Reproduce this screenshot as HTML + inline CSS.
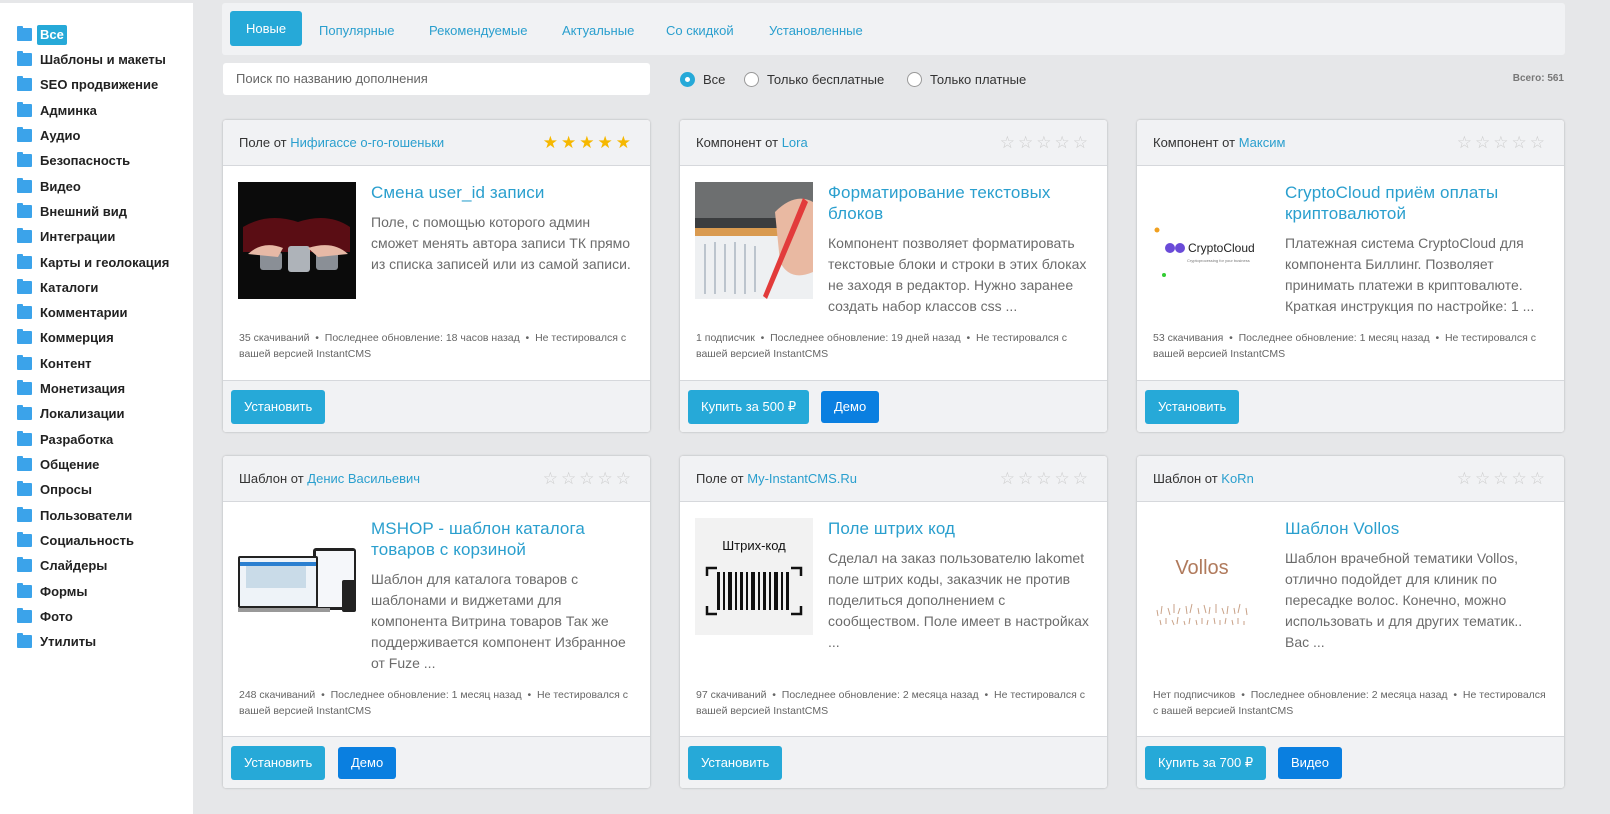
<!DOCTYPE html>
<html><head><meta charset="utf-8"><style>
*{box-sizing:border-box;margin:0;padding:0}
body{width:1610px;height:814px;overflow:hidden;background:#e6e7e9;font-family:"Liberation Sans","DejaVu Sans",sans-serif;position:relative;color:#333}
.side{position:absolute;left:0;top:3px;width:193px;height:811px;background:#fff}
.side div{position:absolute;left:17px;font-size:13px;font-weight:bold;color:#222;height:18px;line-height:18px}
.side div i{position:absolute;left:0;top:2px;width:15px;height:13px;background:#3ba3ea;border-radius:1px}
.side div i:before{content:"";position:absolute;left:0;top:-2px;width:6px;height:3px;background:#3ba3ea;border-radius:1px 1px 0 0}
.side div span{position:absolute;left:23px;white-space:nowrap}
.side div span.act{background:#26a9d8;color:#fff;padding:0 3px;border-radius:2px;left:20px;top:-1px;line-height:20px}
.tabs{position:absolute;left:222px;top:3px;width:1343px;height:52px;background:#f1f2f4;border-radius:3px}
.tabs a{position:absolute;top:11px;height:35px;line-height:33px;font-size:13px;color:#2a9fce;text-decoration:none}
.tabs a.on{background:#26a9d8;color:#fff;border-radius:3px;padding:0 16px;left:8px;top:8px;line-height:35px}
.search{position:absolute;left:223px;top:63px;width:427px;height:32px;background:#fff;border-radius:3px;font-size:13px;color:#666;padding:0 13px;line-height:32px}
.radio{position:absolute;top:72px;font-size:13px;color:#333;line-height:16px}
.radio i{position:absolute;left:0;top:0;width:15px;height:15px;border:1px solid #999;border-radius:50%;background:#fff}
.radio i.on{border:none;background:#26a9d8}
.radio i.on:after{content:"";position:absolute;left:5px;top:5px;width:5px;height:5px;border-radius:50%;background:#fff}
.radio span{margin-left:23px;white-space:nowrap}
.total{position:absolute;right:46px;top:73px;font-size:10px;font-weight:bold;color:#777}
.card{position:absolute;width:427px;background:#fff;border-radius:3px;box-shadow:0 0 2px rgba(0,0,0,.25);overflow:hidden}
.hd{height:46px;background:#f1f2f4;border-bottom:1px solid #d6d8dc;font-size:13px;line-height:46px;padding-left:16px;position:relative;color:#333}
.hd a{color:#2a9fce}
.stars{position:absolute;right:16px;top:0;font-size:17px;letter-spacing:3px;color:#ccc}
.stars.y{color:#f6b800}
.bd{position:relative}
.img{position:absolute;left:15px;top:16px;width:118px;height:117px;overflow:hidden}
.tx{position:absolute;left:148px;top:16px;right:14px}
.tt{font-size:17px;color:#2a9fce;line-height:21px;letter-spacing:.1px}
.ds{font-size:14px;color:#6b6b6b;line-height:21px;margin-top:9px}
.mt{position:absolute;left:16px;right:14px;font-size:10.5px;color:#666;line-height:16px}
.ft{position:absolute;left:0;right:0;bottom:0;height:52px;background:#f1f2f4;border-top:1px solid #d6d8dc}
.b{position:absolute;top:9px;height:34px;line-height:34px;font-size:13px;color:#fff;background:#26a9d8;border-radius:3px;padding:0 13px}
.b.d{background:#0a7fe0;height:32px;line-height:32px;top:10px}
</style></head><body>
<div class="side">
<div style="top:23px"><i></i><span class="act">Все</span></div>
<div style="top:48px"><i></i><span>Шаблоны и макеты</span></div>
<div style="top:73px"><i></i><span>SEO продвижение</span></div>
<div style="top:99px"><i></i><span>Админка</span></div>
<div style="top:124px"><i></i><span>Аудио</span></div>
<div style="top:149px"><i></i><span>Безопасность</span></div>
<div style="top:175px"><i></i><span>Видео</span></div>
<div style="top:200px"><i></i><span>Внешний вид</span></div>
<div style="top:225px"><i></i><span>Интеграции</span></div>
<div style="top:251px"><i></i><span>Карты и геолокация</span></div>
<div style="top:276px"><i></i><span>Каталоги</span></div>
<div style="top:301px"><i></i><span>Комментарии</span></div>
<div style="top:326px"><i></i><span>Коммерция</span></div>
<div style="top:352px"><i></i><span>Контент</span></div>
<div style="top:377px"><i></i><span>Монетизация</span></div>
<div style="top:402px"><i></i><span>Локализации</span></div>
<div style="top:428px"><i></i><span>Разработка</span></div>
<div style="top:453px"><i></i><span>Общение</span></div>
<div style="top:478px"><i></i><span>Опросы</span></div>
<div style="top:504px"><i></i><span>Пользователи</span></div>
<div style="top:529px"><i></i><span>Социальность</span></div>
<div style="top:554px"><i></i><span>Слайдеры</span></div>
<div style="top:580px"><i></i><span>Формы</span></div>
<div style="top:605px"><i></i><span>Фото</span></div>
<div style="top:630px"><i></i><span>Утилиты</span></div>
</div>

<div class="tabs">
<a class="on">Новые</a>
<a style="left:97px">Популярные</a>
<a style="left:207px">Рекомендуемые</a>
<a style="left:340px">Актуальные</a>
<a style="left:444px">Со скидкой</a>
<a style="left:547px">Установленные</a>
</div>
<div class="search">Поиск по названию дополнения</div>
<div class="radio" style="left:680px"><i class="on"></i><span>Все</span></div>
<div class="radio" style="left:744px"><i></i><span>Только бесплатные</span></div>
<div class="radio" style="left:907px"><i></i><span>Только платные</span></div>
<div class="total">Всего: 561</div>

<!-- row 1 -->
<div class="card" style="left:223px;top:120px;height:312px">
<div class="hd">Поле от <a>Нифигассе о-го-гошеньки</a><span class="stars y">★★★★★</span></div>
<div class="bd">
<div class="img" style="background:#0b0b0b"><svg width="118" height="117"><path d="M5 45 Q30 30 60 40 Q90 30 112 45 L112 70 L5 70Z" fill="#5a0d14"/><rect x="22" y="70" width="22" height="18" fill="#8a8f96" rx="3"/><rect x="50" y="64" width="22" height="26" fill="#aeb3b9" rx="3"/><rect x="78" y="70" width="22" height="18" fill="#8a8f96" rx="3"/><path d="M10 72 Q25 58 45 66 L40 75 Z M70 66 Q95 58 110 72 L80 75Z" fill="#e7b9a6"/></svg></div>
<div class="tx"><div class="tt">Смена user_id записи</div><div class="ds">Поле, с помощью которого админ сможет менять автора записи ТК прямо из списка записей или из самой записи.</div></div>
</div>
<div class="mt" style="top:210px">35 скачиваний &nbsp;•&nbsp; Последнее обновление: 18 часов назад &nbsp;•&nbsp; Не тестировался с вашей версией InstantCMS</div>
<div class="ft"><span class="b" style="left:8px">Установить</span></div>
</div>

<div class="card" style="left:680px;top:120px;height:312px">
<div class="hd">Компонент от <a>Lora</a><span class="stars">☆☆☆☆☆</span></div>
<div class="bd">
<div class="img" style="background:#f4f4f2"><svg width="118" height="117"><rect width="118" height="45" fill="#6d6f70"/><rect y="36" width="118" height="10" fill="#3b3d3f"/><rect y="46" width="118" height="8" fill="#d99a50"/><path d="M0 54 L118 54 L118 117 L0 117Z" fill="#eef0f2"/><g stroke="#9aa6b5" stroke-width="1.2"><path d="M10 62v50M20 60v52M30 62v48M40 60v52M50 62v50M60 64v46"/></g><path d="M80 30 Q100 10 118 20 L118 90 Q95 100 85 80Z" fill="#e9b9a2"/><path d="M113 20 L72 117 L68 114 L108 16Z" fill="#e23b3b"/></svg></div>
<div class="tx"><div class="tt">Форматирование текстовых блоков</div><div class="ds">Компонент позволяет форматировать текстовые блоки и строки в этих блоках не заходя в редактор. Нужно заранее создать набор классов css ...</div></div>
</div>
<div class="mt" style="top:210px">1 подписчик &nbsp;•&nbsp; Последнее обновление: 19 дней назад &nbsp;•&nbsp; Не тестировался с вашей версией InstantCMS</div>
<div class="ft"><span class="b" style="left:8px">Купить за 500 ₽</span><span class="b d" style="left:141px">Демо</span></div>
</div>

<div class="card" style="left:1137px;top:120px;height:312px">
<div class="hd">Компонент от <a>Максим</a><span class="stars">☆☆☆☆☆</span></div>
<div class="bd">
<div class="img" style="background:#fff"><svg width="118" height="117"><circle cx="5" cy="48" r="2.5" fill="#f0a020"/><circle cx="12" cy="93" r="2" fill="#3c3"/><circle cx="18" cy="66" r="5" fill="#6a4bd8"/><circle cx="28" cy="66" r="5" fill="#6a4bd8"/><text x="36" y="70" font-size="12" fill="#222" font-family="Liberation Sans">CryptoCloud</text><text x="35" y="80" font-size="4" fill="#777" font-family="Liberation Sans">Cryptoprocessing for your business</text></svg></div>
<div class="tx"><div class="tt">CryptoCloud приём оплаты криптовалютой</div><div class="ds">Платежная система CryptoCloud для компонента Биллинг. Позволяет принимать платежи в криптовалюте. Краткая инструкция по настройке: 1 ...</div></div>
</div>
<div class="mt" style="top:210px">53 скачивания &nbsp;•&nbsp; Последнее обновление: 1 месяц назад &nbsp;•&nbsp; Не тестировался с вашей версией InstantCMS</div>
<div class="ft"><span class="b" style="left:8px">Установить</span></div>
</div>

<!-- row 2 -->
<div class="card" style="left:223px;top:456px;height:332px">
<div class="hd">Шаблон от <a>Денис Васильевич</a><span class="stars">☆☆☆☆☆</span></div>
<div class="bd">
<div class="img" style="background:#fff"><svg width="118" height="117"><rect x="75" y="30" width="43" height="62" rx="3" fill="#222"/><rect x="78" y="33" width="38" height="56" fill="#f5f7fa"/><rect x="0" y="38" width="80" height="52" rx="2" fill="#222"/><rect x="2" y="40" width="76" height="48" fill="#eef3f8"/><rect x="2" y="44" width="76" height="4" fill="#2a7fd0"/><rect x="8" y="48" width="60" height="22" fill="#c9dbe8"/><rect x="0" y="90" width="92" height="4" fill="#999"/><rect x="104" y="62" width="14" height="32" rx="2" fill="#222"/></svg></div>
<div class="tx"><div class="tt">MSHOP - шаблон каталога товаров с корзиной</div><div class="ds">Шаблон для каталога товаров с шаблонами и виджетами для компонента Витрина товаров Так же поддерживается компонент Избранное от Fuze ...</div></div>
</div>
<div class="mt" style="top:231px">248 скачиваний &nbsp;•&nbsp; Последнее обновление: 1 месяц назад &nbsp;•&nbsp; Не тестировался с вашей версией InstantCMS</div>
<div class="ft"><span class="b" style="left:8px">Установить</span><span class="b d" style="left:115px">Демо</span></div>
</div>

<div class="card" style="left:680px;top:456px;height:332px">
<div class="hd">Поле от <a>My-InstantCMS.Ru</a><span class="stars">☆☆☆☆☆</span></div>
<div class="bd">
<div class="img" style="background:#f2f2f2"><svg width="118" height="117"><text x="59" y="32" font-size="13" text-anchor="middle" fill="#111" font-family="Liberation Sans">Штрих-код</text><path d="M12 58v-8h10M106 58v-8h-10M12 88v8h10M106 88v8h-10" stroke="#111" stroke-width="2.5" fill="none"/><g fill="#111"><rect x="22" y="54" width="3" height="38"/><rect x="28" y="54" width="2" height="38"/><rect x="33" y="54" width="4" height="38"/><rect x="40" y="54" width="2" height="38"/><rect x="45" y="54" width="3" height="38"/><rect x="51" y="54" width="2" height="38"/><rect x="56" y="54" width="4" height="38"/><rect x="63" y="54" width="2" height="38"/><rect x="68" y="54" width="3" height="38"/><rect x="74" y="54" width="2" height="38"/><rect x="79" y="54" width="4" height="38"/><rect x="86" y="54" width="2" height="38"/><rect x="91" y="54" width="3" height="38"/></g></svg></div>
<div class="tx"><div class="tt">Поле штрих код</div><div class="ds">Сделал на заказ пользователю lakomet поле штрих коды, заказчик не против поделиться дополнением с сообществом. Поле имеет в настройках ...</div></div>
</div>
<div class="mt" style="top:231px">97 скачиваний &nbsp;•&nbsp; Последнее обновление: 2 месяца назад &nbsp;•&nbsp; Не тестировался с вашей версией InstantCMS</div>
<div class="ft"><span class="b" style="left:8px">Установить</span></div>
</div>

<div class="card" style="left:1137px;top:456px;height:332px">
<div class="hd">Шаблон от <a>KoRn</a><span class="stars">☆☆☆☆☆</span></div>
<div class="bd">
<div class="img" style="background:#fff"><svg width="118" height="117"><text x="50" y="56" font-size="20" text-anchor="middle" fill="#b07a5c" font-family="Liberation Sans">Vollos</text><g stroke="#c9a288" stroke-width="1"><path d="M5 92l1 6M10 88l-1 8M16 90l2 7M22 86l0 9M28 90l-2 6M34 88l1 8M40 86l-2 9M46 90l1 6M52 87l2 8M58 89l-1 7M64 86l0 9M70 90l2 6M76 88l-1 8M82 90l1 6M88 86l-2 9M94 90l1 7M8 102l1 5M14 100l0 6M20 102l2 5M26 99l-1 7M32 103l1 4M38 100l-1 6M44 102l1 5M50 100l0 6M56 102l-1 5M62 100l1 6M68 102l0 5M74 100l-1 6M80 102l1 5M86 100l0 6M92 103l0 4"/></g></svg></div>
<div class="tx"><div class="tt">Шаблон Vollos</div><div class="ds">Шаблон врачебной тематики Vollos, отлично подойдет для клиник по пересадке волос. Конечно, можно использовать и для других тематик.. Вас ...</div></div>
</div>
<div class="mt" style="top:231px">Нет подписчиков &nbsp;•&nbsp; Последнее обновление: 2 месяца назад &nbsp;•&nbsp; Не тестировался с вашей версией InstantCMS</div>
<div class="ft"><span class="b" style="left:8px">Купить за 700 ₽</span><span class="b d" style="left:141px">Видео</span></div>
</div>
</body></html>
